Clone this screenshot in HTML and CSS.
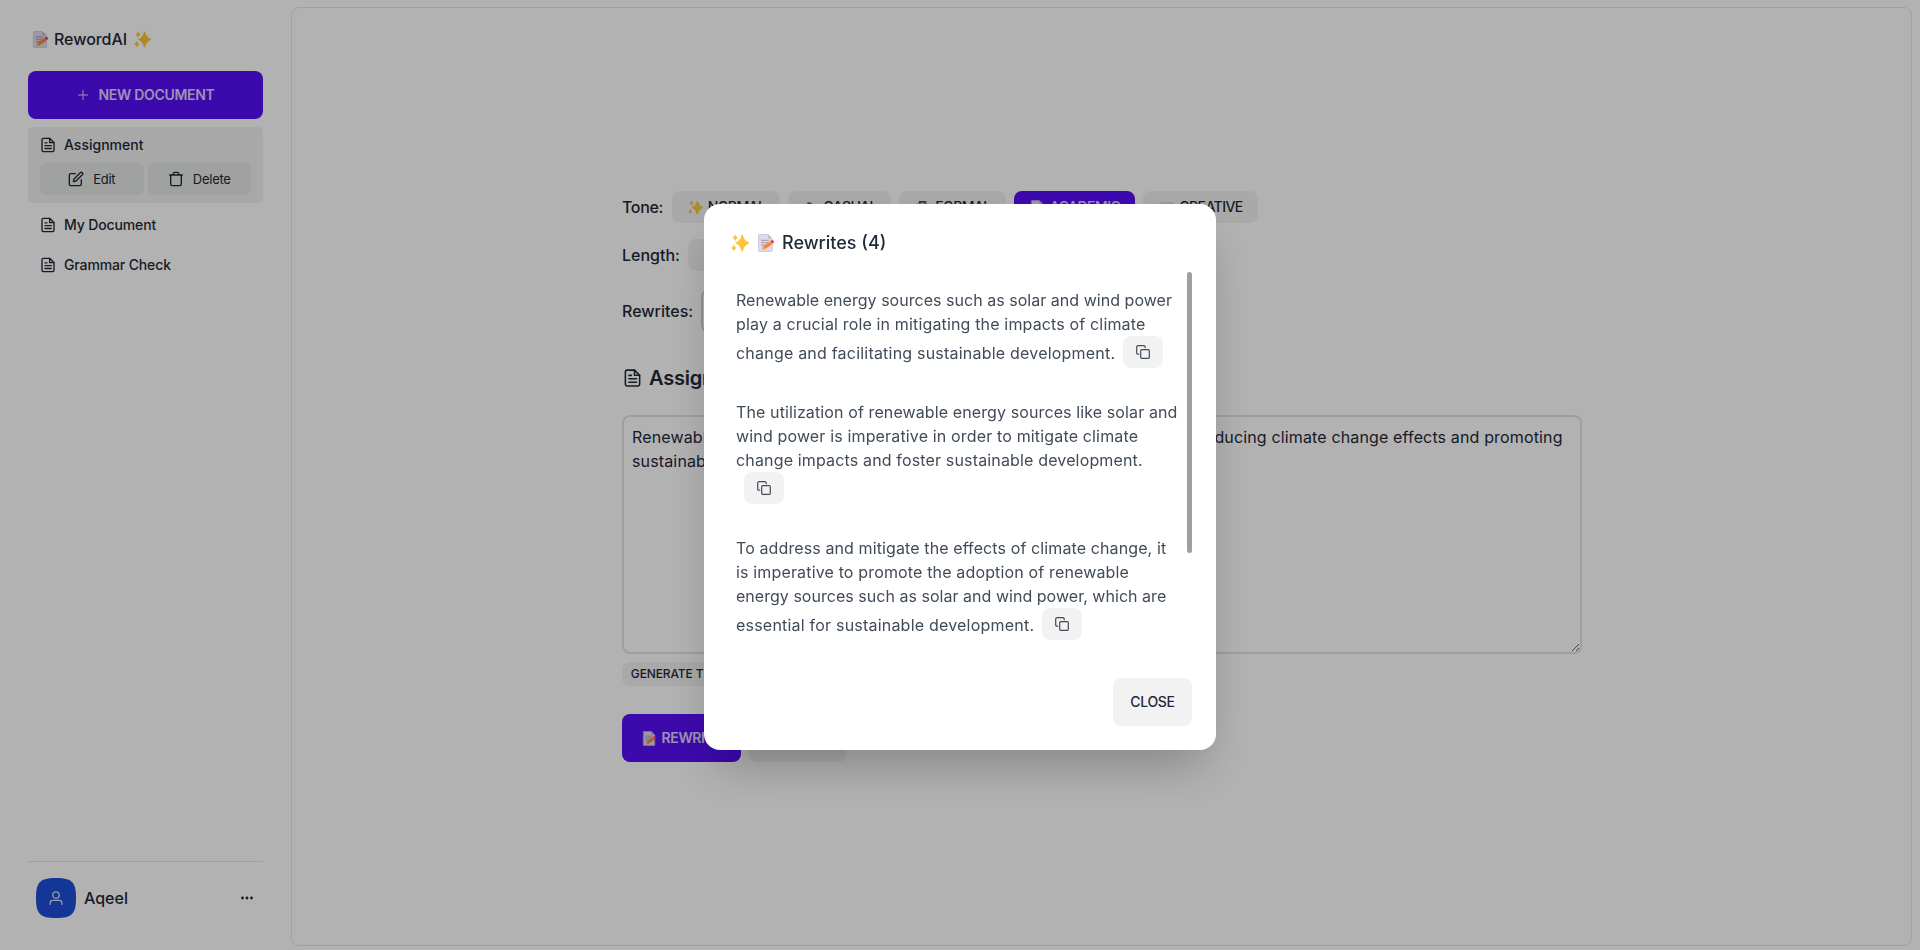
FILE: index.html
```
<!DOCTYPE html>
<html lang="en">
<head>
<meta charset="utf-8">
<title>RewordAI</title>
<link rel="stylesheet" href="styles.css">
</head>
<body>
<svg class="defs" width="0" height="0">
  <symbol id="memo" viewBox="0 0 18 18">
    <path d="M2 1h9l4 4v12H2z" fill="#e2d9ec"/>
    <path d="M1.5 1.2Q1.5.5 2.2.5H11l4.3 4.2v12.1q0 .7-.7.7H2.2q-.7 0-.7-.7z" fill="none" stroke="#cdc2d8" stroke-width=".9"/>
    <path d="M11 .6v4.2h4.2z" fill="#c6bbcf"/>
    <path d="M4 6.3h8M4 8.7h7M4 11h4" stroke="#998ea4" stroke-width=".9"/>
    <path d="M5 15.8l1.1-3.6L13 7.4l2.1 2.9-6.9 4.7z" fill="#ff822d"/>
    <path d="M5 15.8l1.1-3.6 2.1 2.8z" fill="#f3b15e"/>
    <path d="M13.3 7.2l1.2-.9q1.2-.6 2 .5.9 1.2 0 2.1l-1.2.9z" fill="#f8315f"/>
  </symbol>
  <symbol id="sparkles" viewBox="0 0 18 18">
    <path d="M11.2 1.2Q12.6 7.2 17.8 9 12.6 10.8 11.2 17 9.700 10.800 5 9 9.700 7.200 11.200 1.200z" fill="#fcc43a" stroke="#fcc43a" stroke-width="1.200" stroke-linejoin="round"/>
    <path d="M4.300.8Q4.700 3.200 6.700 3.700 4.700 4.200 4.300 6.600 3.800 4.200 1.900 3.700 3.800 3.200 4.300.8zM2.900 11Q3.300 13.400 5.300 13.900 3.300 14.400 2.900 16.800 2.400 14.400.4 13.900 2.400 13.400 2.900 11z" fill="#fcc43a" stroke="#fcc43a" stroke-width=".6"/>
  </symbol>
  <symbol id="doc" viewBox="0 0 24 24" fill="none" stroke="currentColor" stroke-width="2" stroke-linecap="round" stroke-linejoin="round">
    <path d="M14.500 2H5a2 2 0 0 0-2 2v16a2 2 0 0 0 2 2h14a2 2 0 0 0 2-2V8.500z"/><path d="M14.500 2v6.500H21M17 13H7.500M17 17.300H7.500M10.500 8.700h-3"/>
  </symbol>
  <symbol id="edit" viewBox="0 0 24 24" fill="none" stroke="currentColor" stroke-width="2" stroke-linecap="round" stroke-linejoin="round">
    <path d="M11 4H4a2 2 0 0 0-2 2v14a2 2 0 0 0 2 2h14a2 2 0 0 0 2-2v-7"/><path d="M18.500 2.500a2.120 2.120 0 0 1 3 3L12 15l-4 1 1-4z"/>
  </symbol>
  <symbol id="trash" viewBox="0 0 24 24" fill="none" stroke="currentColor" stroke-width="2" stroke-linecap="round" stroke-linejoin="round">
    <path d="M2.500 6h19M20 6v14a2 2 0 0 1-2 2H6a2 2 0 0 1-2-2V6M8 6V4a2 2 0 0 1 2-2h4a2 2 0 0 1 2 2v2"/>
  </symbol>
  <symbol id="user" viewBox="0 0 24 24" fill="none" stroke="currentColor" stroke-width="2.200" stroke-linecap="round" stroke-linejoin="round">
    <circle cx="12" cy="7" r="5.500"/><path d="M2 23v-3a4 4 0 0 1 4-4h12a4 4 0 0 1 4 4v3"/>
  </symbol>
  <symbol id="copy" viewBox="0 0 14 14" fill="none" stroke="currentColor" stroke-width="1.200" stroke-linecap="round" stroke-linejoin="round">
    <rect x="4.700" y="4.700" width="8.600" height="8.600" rx="1"/><path d="M2.700 9.200H2A1.300 1.300 0 0 1 .7 7.900V2A1.300 1.300 0 0 1 2 .7h5.900A1.300 1.300 0 0 1 9.200 2v.7"/>
  </symbol>
</svg>

<div class="app">
  <aside class="sidebar">
    <div class="brand"><svg class="emoji"><use href="#memo"/></svg><span>RewordAI</span><svg class="emoji trailing"><use href="#sparkles"/></svg></div>
    <button class="btn primary new-doc"><svg class="plus" viewBox="0 0 10 10"><path d="M5 0v10M0 5h10" stroke="currentColor"/></svg>NEW DOCUMENT</button>
    <div class="doc-card">
      <div class="doc-name"><svg class="doc-icon"><use href="#doc"/></svg><span class="assignment">Assignment</span></div>
      <div class="doc-actions">
        <button class="mini edit"><svg class="mini-icon"><use href="#edit"/></svg>Edit</button>
        <button class="mini"><svg class="mini-icon"><use href="#trash"/></svg>Delete</button>
      </div>
    </div>
    <div class="doc-name item"><svg class="doc-icon"><use href="#doc"/></svg>My Document</div>
    <div class="doc-name item"><svg class="doc-icon"><use href="#doc"/></svg>Grammar Check</div>
    <div class="profile">
      <div class="avatar"><svg class="avatar-shape" viewBox="0 0 200 200"><path d="M100 0C20 0 0 20 0 100s20 100 100 100 100-20 100-100S180 0 100 0Z" fill="#1d4ed8"/></svg><svg class="user-icon"><use href="#user"/></svg></div>
      <span>Aqeel</span>
      <svg class="dots" viewBox="0 0 12 4"><g fill="currentColor"><circle cx="1.500" cy="2" r="1.400"/><circle cx="6" cy="2" r="1.400"/><circle cx="10.500" cy="2" r="1.400"/></g></svg>
    </div>
  </aside>
  <main class="panel">
    <div class="editor">
      <div class="row tone"><span class="label tone-label">Tone:</span>
        <button class="btn chip normal"><svg class="chip-emoji"><use href="#sparkles"/></svg>NORMAL</button>
        <button class="btn chip casual"><svg class="chip-emoji" viewBox="0 0 16 16"><path d="M5 2l4 1 2 3-1 8H5L4 6z" fill="#635994"/></svg>CASUAL</button>
        <button class="btn chip formal"><svg class="chip-emoji" viewBox="0 0 16 16"><path d="M1 4h14v10H1z" fill="#8c6553"/><path d="M5 4V2h6v2" fill="none" stroke="#64483c" stroke-width="2"/></svg>FORMAL</button>
        <button class="btn chip primary academic"><svg class="chip-emoji"><use href="#memo"/></svg>ACADEMIC</button>
        <button class="btn chip creative"><svg class="chip-emoji" viewBox="0 0 16 16"><path d="M1 3h6l1 1 1-1h6v10H1z" fill="#e7e2ec" stroke="#cdc4d6"/></svg>CREATIVE</button>
      </div>
      <div class="row length"><span class="label">Length:</span><button class="btn chip short">SHORT</button></div>
      <div class="row rewrites"><span class="label">Rewrites:</span><input class="count" value="4"></div>
      <h2 class="title"><svg class="title-icon"><use href="#doc"/></svg>Assignment</h2>
      <textarea class="source">Renewable energy sources such as solar and wind power are essential in reducing climate change effects and promoting sustainable development.</textarea>
      <button class="btn generate">GENERATE TEXT</button>
      <div class="actions"><button class="btn primary rewrite"><svg class="chip-emoji"><use href="#memo"/></svg>REWRITE</button><button class="btn clear">CLEAR</button></div>
    </div>
  </main>
</div>

<div class="overlay">
  <div class="modal">
    <h3 class="modal-title"><svg class="emoji"><use href="#sparkles"/></svg><svg class="emoji"><use href="#memo"/></svg><span>Rewrites (4)</span></h3>
    <div class="list-wrap">
      <div class="list">
        <p><span class="s0">Renewable energy sources such as solar and wind power</span><br><span class="s2">play a crucial role in mitigating the impacts of climate</span><br><span class="s3">change and facilitating sustainable development.</span><button class="btn copy"><svg><use href="#copy"/></svg></button></p>
        <p><span class="s1">The utilization of renewable energy sources like solar and</span><br><span class="s2">wind power is imperative in order to mitigate climate</span><br><span class="s2">change impacts and foster sustainable development.</span><br><button class="btn copy"><svg><use href="#copy"/></svg></button></p>
        <p><span class="s1">To address and mitigate the effects of climate change, it</span><br><span class="s2">is imperative to promote the adoption of renewable</span><br><span class="s0">energy sources such as solar and wind power, which are</span><br><span class="s3">essential for sustainable development.</span><button class="btn copy"><svg><use href="#copy"/></svg></button></p>
      </div>
      <div class="thumb"></div>
    </div>
    <div class="modal-actions"><button class="btn close">CLOSE</button></div>
  </div>
</div>
</body>
</html>
```
FILE: styles.css
```
* { box-sizing: border-box; }
body { margin: 0; height: 950px; overflow: hidden; background: #fff; color: #1f2937; font-family: Inter, sans-serif; font-size: 16px; line-height: 24px; }
button, input, textarea { font-family: inherit; color: inherit; margin: 0; }
h2, h3, p { margin: 0; }
svg { display: block; flex: none; }
.defs { position: absolute; }
.app { display: flex; height: 950px; }

.btn { display: flex; align-items: center; justify-content: center; border: 0; border-radius: 8px; background: #f2f2f2; font-size: 14px; font-weight: 600; line-height: 14px; letter-spacing: -.4px; padding: 0; white-space: nowrap; flex: none; }
.primary { background: #570df8; color: #e0d2fe; font-weight: 600; }

.sidebar { width: 291px; padding: 27px 28px 25px; display: flex; flex-direction: column; flex: none; }
.brand { display: flex; align-items: center; height: 24px; padding-left: 4px; gap: 5px; font-weight: 500; margin-bottom: 20px; }
.brand span { letter-spacing: -.05px; }
.trailing { margin-left: 2px; }
.emoji { width: 17px; height: 17px; }
.new-doc { width: 235px; height: 48px; gap: 10px; padding: 0 0 0 2px; letter-spacing: -.3px; }
.plus { width: 10px; height: 10px; }
.doc-card { margin-top: 8px; height: 76px; padding: 6px 12px 0; border-radius: 5px; background: #f1f1f1; }
.doc-name { display: flex; align-items: center; gap: 8px; font-size: 14px; font-weight: 500; letter-spacing: -.13px; }
.assignment { letter-spacing: 0; }
.doc-icon { width: 16px; height: 16px; }
.doc-actions { display: flex; gap: 4px; margin-top: 6px; }
.mini { display: flex; align-items: center; justify-content: center; gap: 9px; width: 104px; height: 32px; border: 0; border-radius: 6px; background: #e4e8e6; font-size: 13px; letter-spacing: -.25px; padding: 0; }
.mini-icon { width: 16px; height: 16px; }
.item { height: 40px; padding-left: 12px; }
.doc-card + .item { margin-top: 2px; }
.profile { margin-top: auto; display: flex; align-items: center; gap: 8px; height: 64px; border-top: 1px solid #e5e7eb; padding: 9px 10px 0 8px; font-weight: 500; }
.avatar { display: grid; place-items: center; width: 40px; height: 40px; color: #d8e0f4; }
.avatar svg { grid-area: 1 / 1; }
.avatar-shape { width: 40px; height: 40px; }
.user-icon { width: 14px; height: 14px; }
.dots { width: 12px; height: 4px; margin-left: auto; }

.panel { width: 1621px; height: 939px; margin-top: 7px; border: 1px solid #e5e7eb; border-radius: 8px; padding: 183px 0 0 330px; }
.editor { width: 960px; }
.row { display: flex; align-items: center; }
.label { font-weight: 500; }
.tone { gap: 8px; height: 32px; }
.tone-label { letter-spacing: -.35px; width: 42px; }
.chip { height: 32px; gap: 5px; letter-spacing: -.55px; padding-left: 1px; font-weight: 500; }
.chip-emoji { width: 15px; height: 15px; }
.normal { width: 108px; }
.casual { width: 103px; }
.formal { width: 107px; }
.academic { width: 121px; }
.creative { width: 115px; }
.length { margin-top: 16px; height: 32px; gap: 8px; }
.short { width: 80px; }
.rewrites { margin-top: 16px; height: 48px; gap: 8px; }
.count { width: 80px; height: 44px; border: 2px solid #d2d4d7; border-radius: 8px; background: #fff; padding: 0 14px; font-size: 16px; }
.title { display: flex; align-items: center; gap: 7px; margin-top: 29px; height: 28px; font-size: 20px; font-weight: 600; letter-spacing: -.2px; padding-left: 1px; }
.title-icon { width: 19px; height: 20px; }
.source { display: block; width: 960px; height: 239px; margin-top: 23px; border: 2px solid #e2e3e5; border-radius: 8px; background: #fff; padding: 8px; font-size: 16px; line-height: 24px; letter-spacing: .145px; outline: 0; }
.generate { width: 113px; height: 24px; margin-top: 8px; font-size: 12px; font-weight: 500; letter-spacing: -.12px; }
.actions { display: flex; gap: 8px; margin-top: 28px; }
.rewrite { width: 119px; height: 48px; gap: 5px; }
.clear { width: 97px; height: 48px; }

.overlay { position: fixed; inset: 0; display: grid; place-items: center; background: rgba(0, 0, 0, .3); }
.modal { width: 512px; height: 546px; margin-top: 4px; padding: 24px; border-radius: 16px; background: #fff; box-shadow: 0 25px 50px -12px rgba(0, 0, 0, .27); }
.modal-title { display: flex; align-items: center; height: 28px; padding: 2px 0 0 3px; gap: 8px; font-size: 18px; font-weight: 500; }
.modal-title .emoji { width: 18px; height: 18px; }
.modal-title span { margin-left: -1px; }
.list-wrap { display: flex; justify-content: space-between; height: 382px; margin-top: 16px; overflow: hidden; }
.list { width: 456px; color: #414b59; }
.list p { padding: 16px 8px; white-space: nowrap; }
.thumb { width: 5px; height: 281px; border-radius: 3px; background: #9f9f9f; }
.s0 { letter-spacing: .03px; }
.s1 { letter-spacing: .11px; }
.s2 { letter-spacing: .155px; }
.s3 { letter-spacing: .21px; }
.copy { display: inline-flex; width: 40px; height: 32px; margin-left: 8px; vertical-align: 0; }
.copy svg { width: 14px; height: 14px; }
.modal-actions { display: flex; justify-content: flex-end; margin-top: 24px; }
.close { width: 79px; height: 48px; font-weight: 500; letter-spacing: -.3px; }
```
